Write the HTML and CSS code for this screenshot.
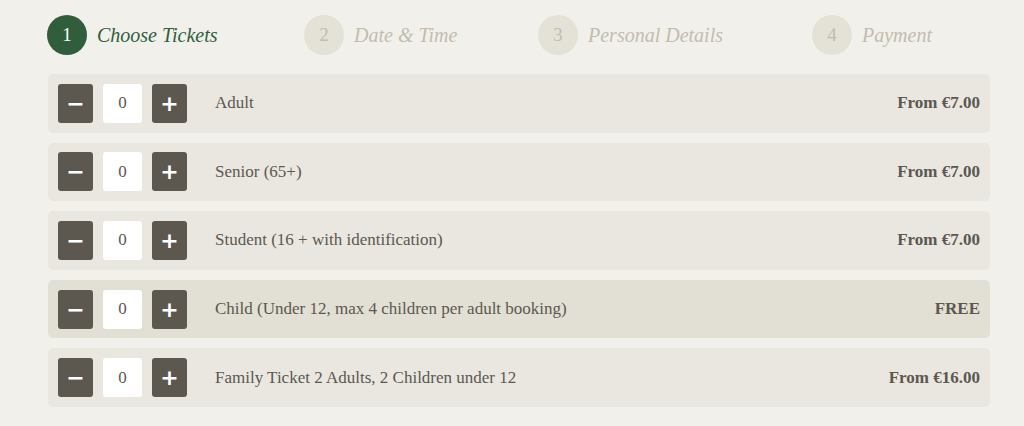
FILE: index.html
```html
<!DOCTYPE html>
<html lang="en">
<head>
<meta charset="utf-8">
<title>Choose Tickets</title>
<link rel="stylesheet" href="styles.css">
</head>
<body>
<div class="booking">
  <ol class="steps">
    <li class="step active"><span class="num">1</span><span class="label">Choose Tickets</span></li>
    <li class="step"><span class="num">2</span><span class="label">Date &amp; Time</span></li>
    <li class="step"><span class="num">3</span><span class="label">Personal Details</span></li>
    <li class="step"><span class="num">4</span><span class="label">Payment</span></li>
  </ol>
  <div class="tickets">
    <div class="ticket">
      <div class="qty"><button class="btn" aria-label="Decrease">&minus;</button><span class="count">0</span><button class="btn" aria-label="Increase">+</button></div>
      <span class="name">Adult</span>
      <span class="price">From €7.00</span>
    </div>
    <div class="ticket">
      <div class="qty"><button class="btn" aria-label="Decrease">&minus;</button><span class="count">0</span><button class="btn" aria-label="Increase">+</button></div>
      <span class="name">Senior (65+)</span>
      <span class="price">From €7.00</span>
    </div>
    <div class="ticket">
      <div class="qty"><button class="btn" aria-label="Decrease">&minus;</button><span class="count">0</span><button class="btn" aria-label="Increase">+</button></div>
      <span class="name">Student (16 + with identification)</span>
      <span class="price">From €7.00</span>
    </div>
    <div class="ticket highlight">
      <div class="qty"><button class="btn" aria-label="Decrease">&minus;</button><span class="count">0</span><button class="btn" aria-label="Increase">+</button></div>
      <span class="name">Child (Under 12, max 4 children per adult booking)</span>
      <span class="price">FREE</span>
    </div>
    <div class="ticket">
      <div class="qty"><button class="btn" aria-label="Decrease">&minus;</button><span class="count">0</span><button class="btn" aria-label="Increase">+</button></div>
      <span class="name">Family Ticket 2 Adults, 2 Children under 12</span>
      <span class="price">From €16.00</span>
    </div>
  </div>
</div>
</body>
</html>
```
FILE: styles.css
```css
html, body {
  margin: 0;
  padding: 0;
  background: #f2f0eb;
  font-family: "Liberation Serif", "DejaVu Serif", serif;
  color: #5c5850;
}
.booking {
  padding: 15px 34px 0 48px;
}
.steps {
  list-style: none;
  margin: 0 0 19px -1px;
  padding: 0;
  display: grid;
  grid-template-columns: 257px 234px 274px auto;
}
.step {
  display: flex;
  align-items: center;
  gap: 10px;
}
.num {
  width: 40px;
  height: 40px;
  border-radius: 50%;
  background: #e4e1d7;
  color: #c2bdae;
  display: flex;
  align-items: center;
  justify-content: center;
  font-size: 19px;
}
.label {
  font-style: italic;
  font-size: 20px;
  color: #c2bdae;
}
.step.active .num {
  background: #305e3c;
  color: #ffffff;
}
.step.active .label {
  color: #305e3c;
}
.tickets {
  display: flex;
  flex-direction: column;
  gap: 10px;
}
.ticket {
  display: flex;
  align-items: center;
  height: 58.6px;
  padding: 0 10px;
  background: #eae7e1;
  border-radius: 5px;
}
.ticket.highlight {
  background: #e2dfd4;
}
.qty {
  display: flex;
  gap: 10px;
  margin-right: 28px;
}
.btn {
  width: 35px;
  height: 39px;
  border: 0;
  padding: 0;
  border-radius: 3px;
  background: #5c5850;
  color: #ffffff;
  font-family: "DejaVu Sans", sans-serif;
  font-weight: bold;
  font-size: 22px;
  line-height: 39px;
}
.count {
  width: 39px;
  height: 39px;
  background: #ffffff;
  border-radius: 3px;
  display: flex;
  align-items: center;
  justify-content: center;
  font-size: 17px;
  color: #5c5850;
}
.name {
  flex: 1;
  font-size: 17px;
}
.price {
  font-weight: bold;
  font-size: 17px;
}
```
